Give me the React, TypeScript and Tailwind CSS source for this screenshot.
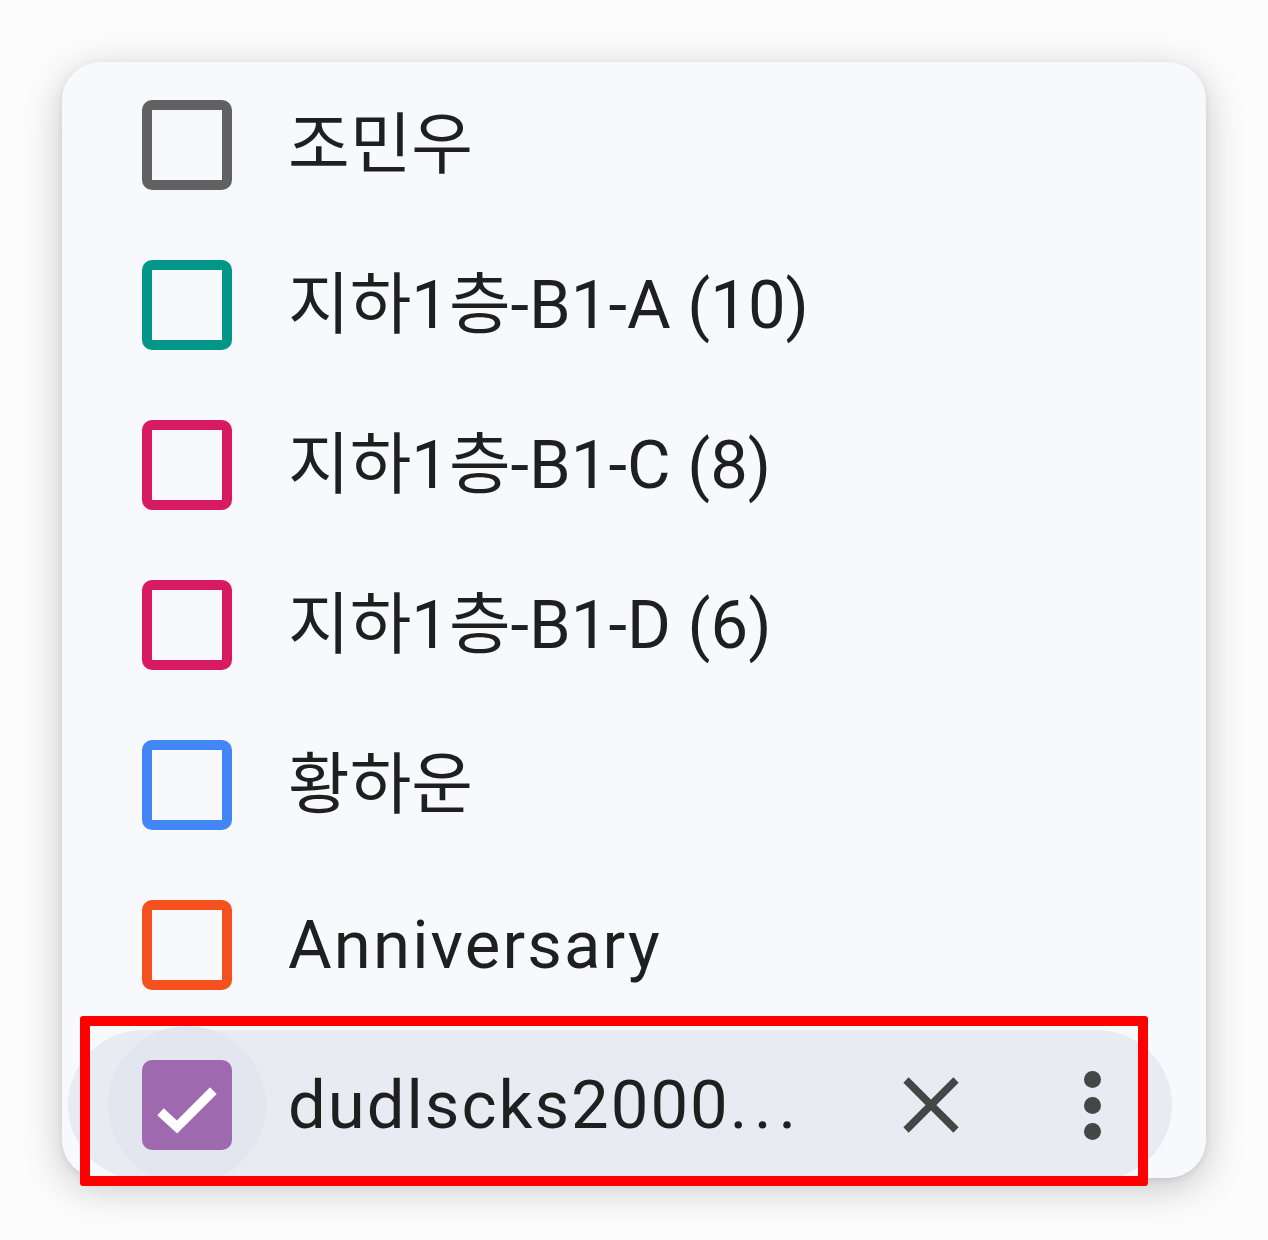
import React from "react";

const rows = [
  { label: "조민우", color: "#616161", latin: false },
  { label: "지하1층-B1-A (10)", color: "#009688", latin: false },
  { label: "지하1층-B1-C (8)", color: "#d81b60", latin: false },
  { label: "지하1층-B1-D (6)", color: "#d81b60", latin: false },
  { label: "황하운", color: "#4285f4", latin: false },
  { label: "Anniversary", color: "#f4511e", latin: true },
];

const font = { fontFamily: 'Roboto, "Noto Sans CJK KR", sans-serif' };

export default function App() {
  return (
    <div className="relative w-[1268px] h-[1240px] bg-[#fcfcfc] overflow-hidden" style={font}>
      <div className="absolute left-[62px] top-[62px] w-[1144px] h-[1116px] rounded-[38px] bg-[#f8f9fc] overflow-hidden shadow-[0_10px_40px_rgba(0,0,0,0.22),0_2px_6px_rgba(0,0,0,0.08)]">
        <div className="flex flex-col pt-[3px]">
          {rows.map((r) => (
            <div key={r.label} className="flex items-center h-[160px] pl-[80px]">
              <div
                className="w-[90px] h-[90px] rounded-[10px] border-[10px] shrink-0"
                style={{ borderColor: r.color }}
              />
              <span
                className={
                  r.latin
                    ? "ml-[56px] text-[67px] leading-none tracking-[0.032em] text-[#1f1f1f] whitespace-nowrap"
                    : "ml-[56px] text-[67px] leading-none text-[#1f1f1f] whitespace-nowrap"
                }
              >
                {r.label}
              </span>
            </div>
          ))}
          <div className="flex items-center h-[160px]">
            <div className="ml-[6px] w-[1104px] h-[150px] rounded-full bg-[#e8ebf2] flex items-center">
              <div className="ml-[40px] w-[158px] h-[158px] rounded-full bg-[#e3e6ef] flex items-center justify-center shrink-0">
                <div className="w-[90px] h-[90px] rounded-[10px] bg-[#9e69af]">
                  <svg width="90" height="90" viewBox="0 0 90 90">
                    <path d="M22 55L35 67L68 34" fill="none" stroke="#fff" strokeWidth="9.5" strokeLinecap="square" />
                  </svg>
                </div>
              </div>
              <span className="ml-[22px] w-[510px] text-[67px] leading-none tracking-[0.03em] text-[#1f1f1f] whitespace-nowrap">
                dudlscks2000<span className="tracking-[0.1em]">...</span>
              </span>
              <div className="ml-[103px] w-[60px] h-[60px] flex items-center justify-center">
                <svg width="60" height="60" viewBox="0 0 60 60">
                  <path d="M5 5L55 55M55 5L5 55" stroke="#444746" strokeWidth="7.5" strokeLinecap="butt" />
                </svg>
              </div>
              <div className="ml-[123px] flex flex-col items-center gap-[9px]">
                <div className="w-[17px] h-[17px] rounded-full bg-[#444746]" />
                <div className="w-[17px] h-[17px] rounded-full bg-[#444746]" />
                <div className="w-[17px] h-[17px] rounded-full bg-[#444746]" />
              </div>
            </div>
          </div>
        </div>
      </div>
      <div className="absolute left-[80px] top-[1016px] w-[1068px] h-[170px] border-[10px] border-[#ff0000] rounded-[3px]" />
    </div>
  );
}
